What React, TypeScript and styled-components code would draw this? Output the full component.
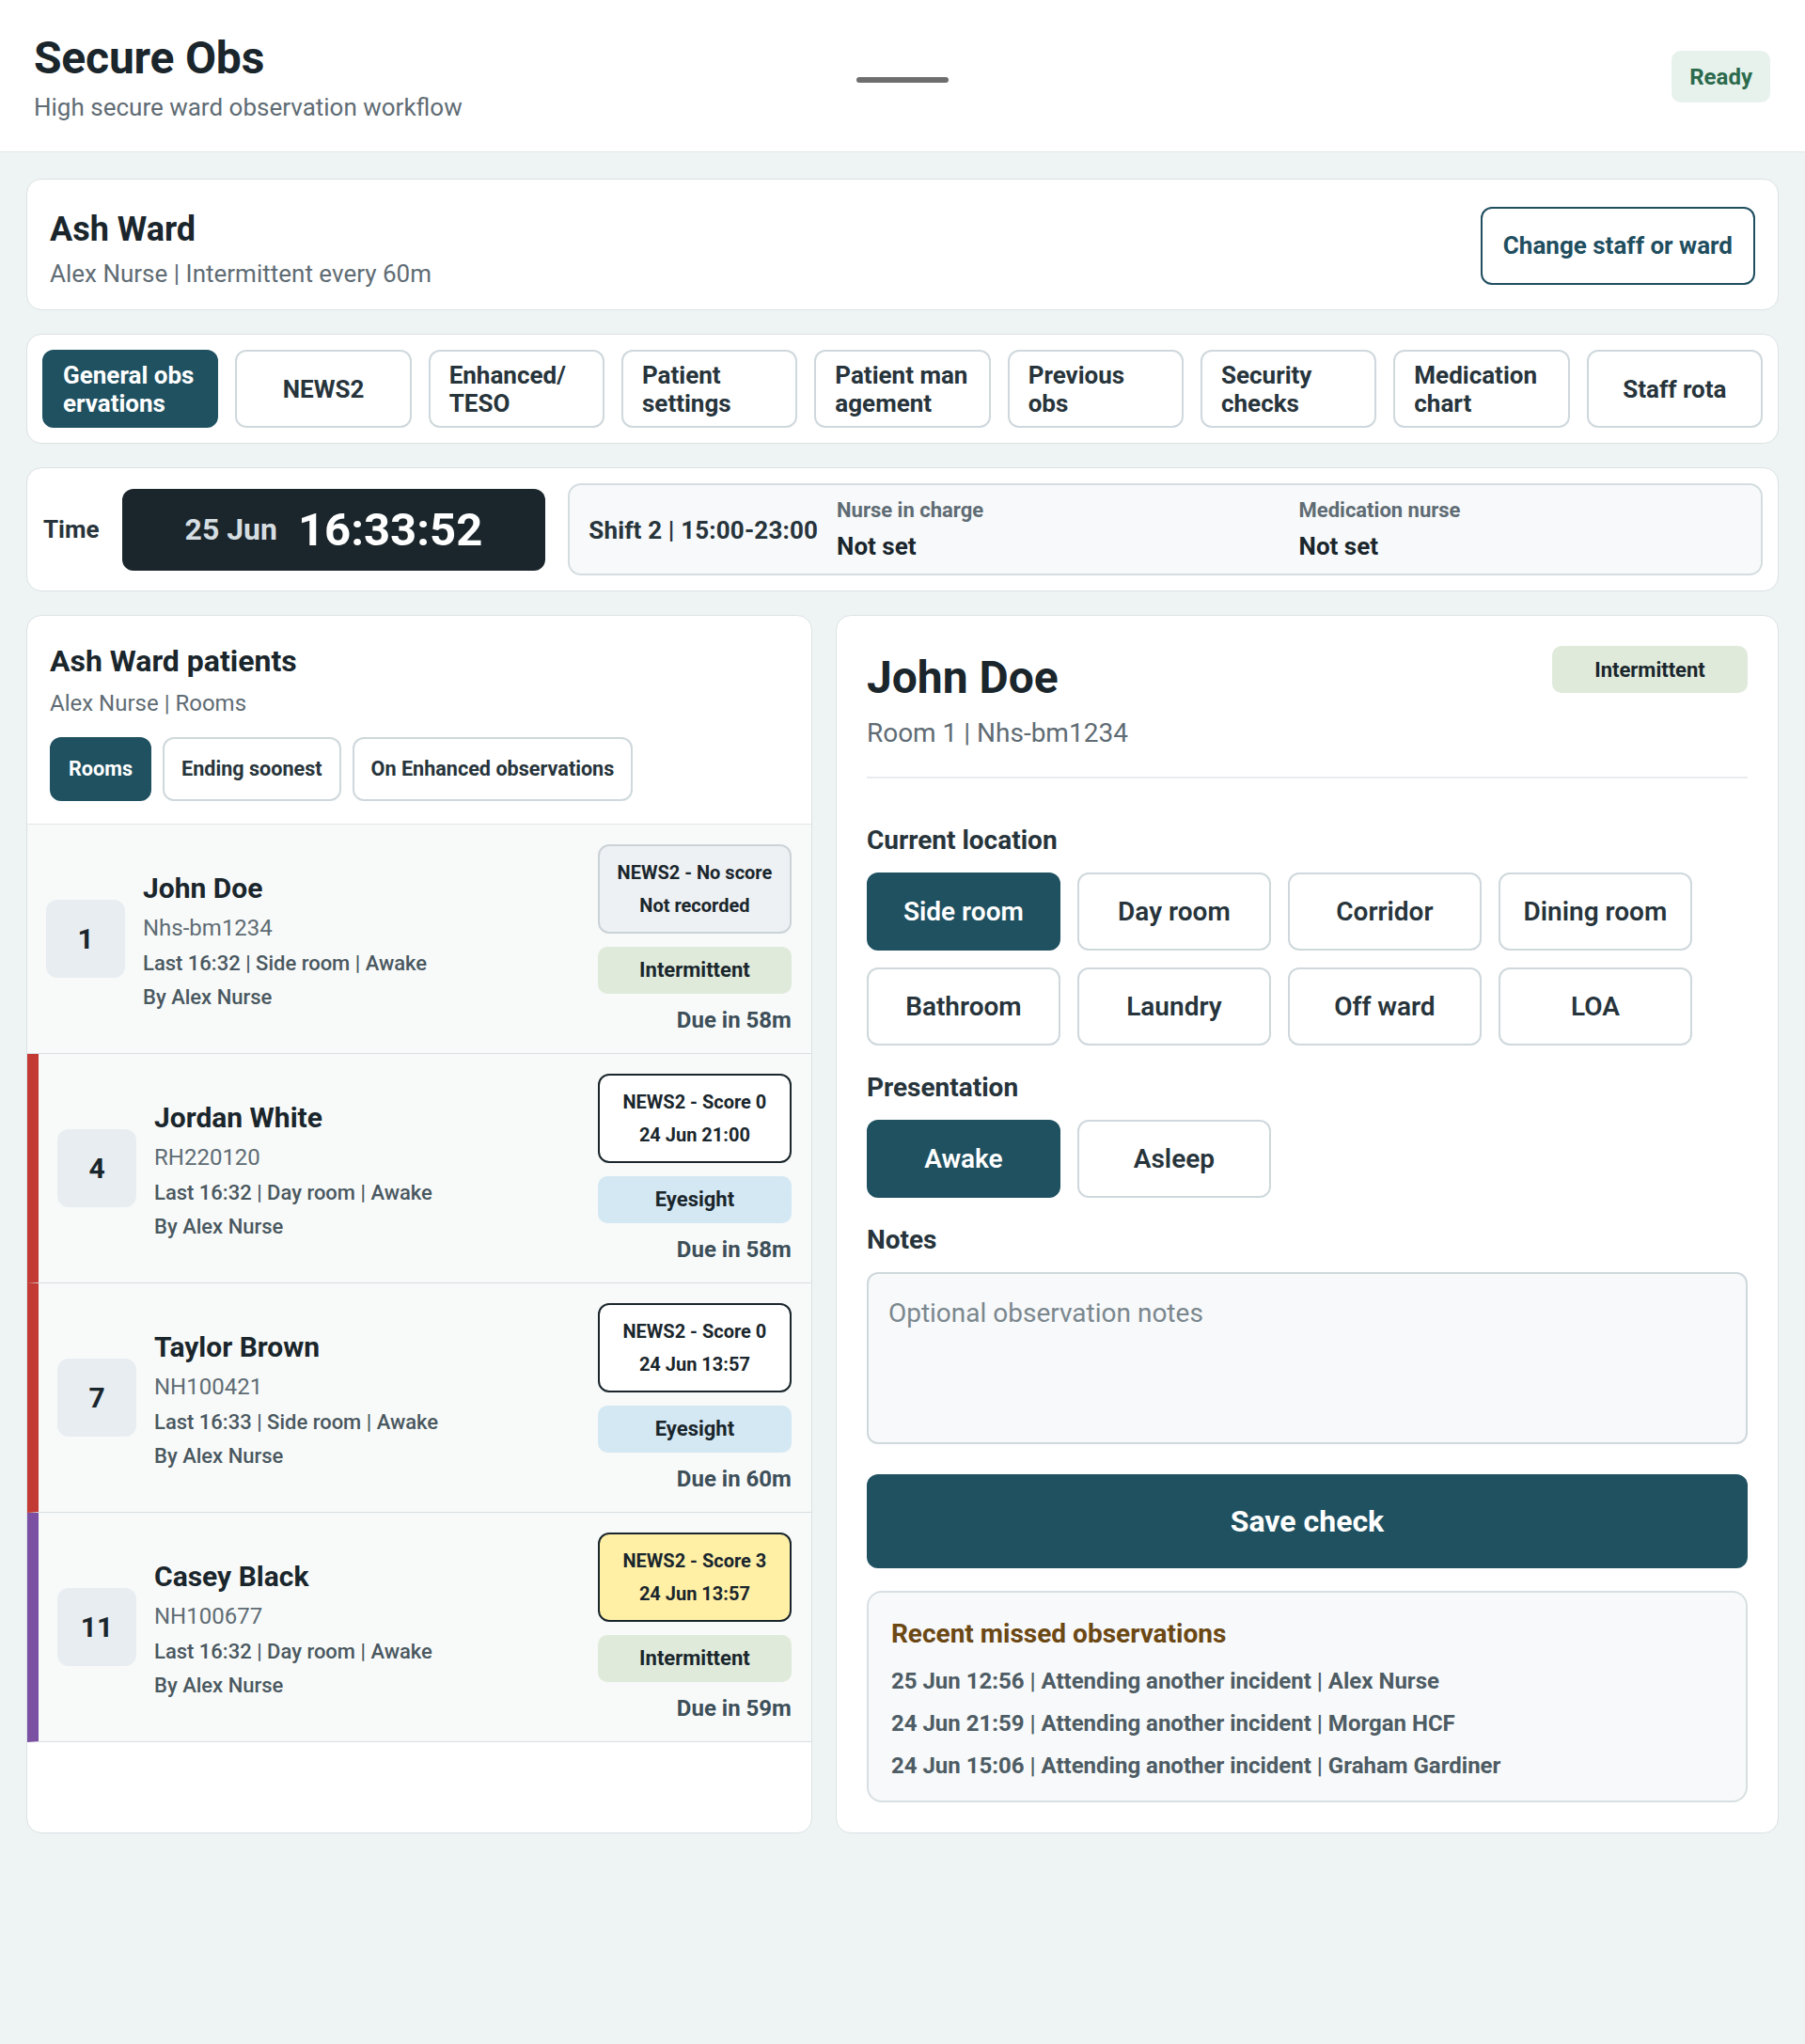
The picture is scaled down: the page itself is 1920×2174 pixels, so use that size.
import React from 'react';
import styled, { createGlobalStyle } from 'styled-components';

const GlobalStyle = createGlobalStyle`
  * {
    box-sizing: border-box;
  }
  body {
    margin: 0;
    background: #eef3f3;
    font-family: Roboto, 'Liberation Sans', Arial, sans-serif;
    color: #1a262c;
  }
  button,
  textarea {
    font-family: inherit;
  }
`;

const TopBar = styled.header`
  display: grid;
  grid-template-columns: 1fr auto 1fr;
  align-items: center;
  padding: 33px 37px 31px 36px;
  background: #fff;
  border-bottom: 1px solid #e1e7e8;
`;

const Brand = styled.div`
  display: flex;
  flex-direction: column;
  gap: 8px;
`;

const AppTitle = styled.h1`
  margin: 0;
  font-size: 48px;
  line-height: 58px;
  font-weight: 700;
  letter-spacing: -0.2px;
  color: #1a262c;
`;

const AppSubtitle = styled.p`
  margin: 0;
  font-size: 26px;
  line-height: 31px;
  color: #5f6c74;
`;

const Handle = styled.div`
  width: 98px;
  height: 6px;
  margin-top: 6px;
  border-radius: 3px;
  background: #6e6e6e;
`;

const ReadyPill = styled.span`
  justify-self: end;
  display: inline-flex;
  align-items: center;
  height: 55px;
  padding: 0 19px;
  border-radius: 10px;
  background: #e7f2ec;
  color: #2c6a4d;
  font-size: 24px;
  font-weight: 700;
`;

const Main = styled.main`
  display: flex;
  flex-direction: column;
  gap: 25px;
  padding: 28px 28px 60px;
`;

const Card = styled.section`
  background: #fff;
  border: 1px solid #dbe2e5;
  border-radius: 16px;
`;

const WardCard = styled(Card)`
  display: flex;
  justify-content: space-between;
  align-items: center;
  padding: 24px 24px 22px;
`;

const TitleBlock = styled.div`
  display: flex;
  flex-direction: column;
  gap: 10px;
  padding-top: 8px;
`;

const WardName = styled.h2`
  margin: 0;
  font-size: 36px;
  line-height: 43px;
  font-weight: 700;
  color: #1a262c;
`;

const Muted = styled.p<{ $size?: number }>`
  margin: 0;
  font-size: ${({ $size }) => $size ?? 26}px;
  line-height: 1.2;
  color: #5f6c74;
`;

const OutlineButton = styled.button`
  height: 83px;
  padding: 0 22px;
  border: 2px solid #1f4e5f;
  border-radius: 12px;
  background: #fff;
  color: #1f4e5f;
  font-size: 26px;
  font-weight: 700;
`;

const TabsCard = styled(Card)`
  display: grid;
  grid-template-columns: repeat(9, minmax(0, 1fr));
  gap: 18px;
  padding: 16px;
`;

const Tab = styled.button<{ $active?: boolean }>`
  min-width: 0;
  height: 83px;
  padding: 0 20px;
  display: flex;
  align-items: center;
  justify-content: center;
  text-align: left;
  border-radius: 12px;
  border: 2px solid ${({ $active }) => ($active ? '#1f5161' : '#cfd8dc')};
  background: ${({ $active }) => ($active ? '#1f5161' : '#fff')};
  color: ${({ $active }) => ($active ? '#fff' : '#27343b')};
  font-size: 26px;
  font-weight: 700;
  line-height: 30px;
  overflow-wrap: anywhere;
`;

const TimeCard = styled(Card)`
  display: grid;
  grid-template-columns: auto auto 1fr;
  align-items: center;
  gap: 24px;
  padding: 16px 16px 16px 17px;
`;

const FieldLabel = styled.span`
  font-size: 26px;
  font-weight: 700;
  color: #27343b;
`;

const ShiftLabel = styled(FieldLabel)`
  letter-spacing: 0.15px;
`;

const Clock = styled.div`
  display: flex;
  align-items: center;
  gap: 22px;
  height: 87px;
  padding: 0 67px;
  border-radius: 12px;
  background: #1a262c;
`;

const ClockDate = styled.span`
  font-size: 32px;
  font-weight: 700;
  color: #d5dde1;
`;

const ClockTime = styled.span`
  font-size: 49px;
  font-weight: 700;
  color: #fff;
`;

const ShiftBox = styled.div`
  display: grid;
  grid-template-columns: auto 1fr 1fr;
  align-items: center;
  gap: 20px;
  padding: 14px 20px 13px;
  border: 2px solid #d5dde0;
  border-radius: 14px;
  background: #f7f9fa;
`;

const StaffSlot = styled.div`
  display: flex;
  flex-direction: column;
  gap: 10px;
`;

const SlotLabel = styled.span`
  font-size: 22px;
  line-height: 26px;
  font-weight: 700;
  color: #5f6c74;
`;

const SlotValue = styled.span`
  font-size: 26px;
  line-height: 31px;
  font-weight: 700;
  color: #1a262c;
`;

const Columns = styled.div`
  display: grid;
  grid-template-columns: 5fr 6fr;
  gap: 25px;
  align-items: stretch;
`;

const PatientsCard = styled(Card)`
  display: flex;
  flex-direction: column;
  overflow: hidden;
`;

const PatientsHead = styled.div`
  padding: 29px 24px 24px;
  border-bottom: 1px solid #e1e6e8;
`;

const PanelTitle = styled.h2`
  margin: 0 0 12px;
  font-size: 32px;
  line-height: 38px;
  font-weight: 700;
  color: #1a262c;
`;

const FilterRow = styled.div`
  display: flex;
  gap: 12px;
  margin-top: 21px;
`;

const FilterButton = styled.button<{ $active?: boolean }>`
  height: 68px;
  padding: 0 18px;
  border-radius: 12px;
  border: 2px solid ${({ $active }) => ($active ? '#1f5161' : '#cfd8dc')};
  background: ${({ $active }) => ($active ? '#1f5161' : '#fff')};
  color: ${({ $active }) => ($active ? '#fff' : '#27343b')};
  font-size: 21.6px;
  font-weight: 700;
`;

const PatientRow = styled.div<{ $flag?: string }>`
  display: grid;
  grid-template-columns: 84px 1fr 206px;
  align-items: center;
  gap: 19px;
  padding: 21px 21px 20px 20px;
  background: #f8faf9;
  border-bottom: 1px solid #d8dee2;
  border-left: ${({ $flag }) => ($flag ? `12px solid ${$flag}` : 'none')};
`;

const RoomBox = styled.div`
  height: 83px;
  display: flex;
  align-items: center;
  justify-content: center;
  border-radius: 12px;
  background: #e8edf1;
  font-size: 30px;
  font-weight: 700;
  color: #1a262c;
`;

const PatientInfo = styled.div`
  display: flex;
  flex-direction: column;
  gap: 10px;
  min-width: 0;
  padding-top: 4px;
`;

const PatientName = styled.span`
  font-size: 30px;
  line-height: 36px;
  font-weight: 700;
  color: #1a262c;
`;

const PatientId = styled.span`
  font-size: 24px;
  line-height: 29px;
  color: #5f6c74;
`;

const PatientMeta = styled.span`
  font-size: 22px;
  line-height: 26px;
  font-weight: 500;
  color: #4a5860;
`;

const PatientSide = styled.div`
  display: flex;
  flex-direction: column;
`;

const newsTones = {
  none: { bg: '#eef1f3', border: '#cbd3d8' },
  clear: { bg: '#fff', border: '#1a262c' },
  warn: { bg: '#fff0a6', border: '#1a262c' },
};

type NewsTone = keyof typeof newsTones;

const NewsBox = styled.div<{ $tone: NewsTone }>`
  display: flex;
  flex-direction: column;
  align-items: center;
  gap: 11px;
  padding: 16px 10px;
  border-radius: 12px;
  border: 2px solid ${({ $tone }) => newsTones[$tone].border};
  background: ${({ $tone }) => newsTones[$tone].bg};
  font-size: 20px;
  line-height: 24px;
  font-weight: 700;
  color: #1a262c;
`;

const levelColors: Record<string, string> = {
  Intermittent: '#dfeadb',
  Eyesight: '#d4e8f3',
};

const LevelBadge = styled.div<{ $level: string }>`
  height: 50px;
  display: flex;
  align-items: center;
  justify-content: center;
  border-radius: 10px;
  background: ${({ $level }) => levelColors[$level] ?? '#e8edf1'};
  font-size: 22px;
  font-weight: 700;
  color: #1a262c;
`;

const RowBadge = styled(LevelBadge)`
  margin: 14px 0 13px;
`;

const DueText = styled.span`
  font-size: 24px;
  line-height: 30px;
  font-weight: 700;
  color: #3d4f59;
  text-align: right;
`;

const DetailCard = styled(Card)`
  display: flex;
  flex-direction: column;
  padding: 32px;
`;

const DetailHead = styled.div`
  display: flex;
  justify-content: space-between;
  align-items: flex-start;
  padding-bottom: 29px;
  border-bottom: 2px solid #e8ecee;
`;

const PatientHeading = styled.h2`
  margin: 5px 0 13px;
  font-size: 48px;
  line-height: 58px;
  font-weight: 700;
  color: #1a262c;
`;

const HeadBadge = styled(LevelBadge)`
  width: 208px;
`;

const Form = styled.div`
  display: flex;
  flex-direction: column;
  gap: 28px;
  margin-top: 49px;
`;

const Field = styled.div`
  display: flex;
  flex-direction: column;
  gap: 17px;
`;

const SectionLabel = styled.span`
  font-size: 28px;
  line-height: 34px;
  font-weight: 700;
  color: #27343b;
`;

const ChoiceGrid = styled.div`
  display: grid;
  grid-template-columns: repeat(4, 206px);
  gap: 18px;
`;

const Choice = styled.button<{ $active?: boolean }>`
  height: 83px;
  border-radius: 12px;
  border: 2px solid ${({ $active }) => ($active ? '#1f5161' : '#cfd8dc')};
  background: ${({ $active }) => ($active ? '#1f5161' : '#fff')};
  color: ${({ $active }) => ($active ? '#fff' : '#27343b')};
  font-size: 28px;
  font-weight: 600;
`;

const NotesInput = styled.textarea`
  height: 183px;
  padding: 24px 21px;
  border: 2px solid #cfd8dc;
  border-radius: 12px;
  background: #f7f9fa;
  font-size: 28px;
  line-height: 36px;
  color: #1a262c;
  resize: none;
  outline: none;

  &::placeholder {
    color: #7b878e;
  }
`;

const SaveButton = styled.button`
  height: 100px;
  margin-top: 4px;
  border: none;
  border-radius: 12px;
  background: #1f5161;
  color: #fff;
  font-size: 32px;
  font-weight: 700;
`;

const MissedBox = styled.div`
  display: flex;
  flex-direction: column;
  gap: 15px;
  margin-top: 24px;
  padding: 27px 24px 22px;
  border: 2px solid #d8dfe2;
  border-radius: 16px;
  background: #f7f9fa;
`;

const MissedTitle = styled.span`
  margin-bottom: 3px;
  font-size: 28px;
  line-height: 34px;
  font-weight: 700;
  color: #6b4814;
`;

const MissedLine = styled.span`
  font-size: 24px;
  line-height: 30px;
  font-weight: 700;
  color: #4e5c64;
`;

// <wbr> marks where the long words split, as the reference layout does
const tabs: React.ReactNode[] = [
  <>General obs<wbr />ervations</>,
  'NEWS2',
  'Enhanced/ TESO',
  'Patient settings',
  <>Patient man<wbr />agement</>,
  'Previous obs',
  'Security checks',
  'Medication chart',
  'Staff rota',
];

const filters = ['Rooms', 'Ending soonest', 'On Enhanced observations'];

const patients: {
  room: string;
  name: string;
  id: string;
  last: string;
  news: [string, string];
  tone: NewsTone;
  level: string;
  due: string;
  flag?: string;
}[] = [
  {
    room: '1',
    name: 'John Doe',
    id: 'Nhs-bm1234',
    last: 'Last 16:32 | Side room | Awake',
    news: ['NEWS2 - No score', 'Not recorded'],
    tone: 'none',
    level: 'Intermittent',
    due: 'Due in 58m',
  },
  {
    room: '4',
    name: 'Jordan White',
    id: 'RH220120',
    last: 'Last 16:32 | Day room | Awake',
    news: ['NEWS2 - Score 0', '24 Jun 21:00'],
    tone: 'clear',
    level: 'Eyesight',
    due: 'Due in 58m',
    flag: '#c23a33',
  },
  {
    room: '7',
    name: 'Taylor Brown',
    id: 'NH100421',
    last: 'Last 16:33 | Side room | Awake',
    news: ['NEWS2 - Score 0', '24 Jun 13:57'],
    tone: 'clear',
    level: 'Eyesight',
    due: 'Due in 60m',
    flag: '#c23a33',
  },
  {
    room: '11',
    name: 'Casey Black',
    id: 'NH100677',
    last: 'Last 16:32 | Day room | Awake',
    news: ['NEWS2 - Score 3', '24 Jun 13:57'],
    tone: 'warn',
    level: 'Intermittent',
    due: 'Due in 59m',
    flag: '#7b4fa2',
  },
];

const locations = ['Side room', 'Day room', 'Corridor', 'Dining room', 'Bathroom', 'Laundry', 'Off ward', 'LOA'];

const missed = [
  '25 Jun 12:56 | Attending another incident | Alex Nurse',
  '24 Jun 21:59 | Attending another incident | Morgan HCF',
  '24 Jun 15:06 | Attending another incident | Graham Gardiner',
];

export default function App() {
  return (
    <>
      <GlobalStyle />
      <TopBar>
        <Brand>
          <AppTitle>Secure Obs</AppTitle>
          <AppSubtitle>High secure ward observation workflow</AppSubtitle>
        </Brand>
        <Handle />
        <ReadyPill>Ready</ReadyPill>
      </TopBar>

      <Main>
        <WardCard>
          <TitleBlock>
            <WardName>Ash Ward</WardName>
            <Muted>Alex Nurse | Intermittent every 60m</Muted>
          </TitleBlock>
          <OutlineButton>Change staff or ward</OutlineButton>
        </WardCard>

        <TabsCard>
          {tabs.map((t, i) => (
            <Tab key={i} $active={i === 0}>
              {t}
            </Tab>
          ))}
        </TabsCard>

        <TimeCard>
          <FieldLabel>Time</FieldLabel>
          <Clock>
            <ClockDate>25 Jun</ClockDate>
            <ClockTime>16:33:52</ClockTime>
          </Clock>
          <ShiftBox>
            <ShiftLabel>Shift 2 | 15:00-23:00</ShiftLabel>
            <StaffSlot>
              <SlotLabel>Nurse in charge</SlotLabel>
              <SlotValue>Not set</SlotValue>
            </StaffSlot>
            <StaffSlot>
              <SlotLabel>Medication nurse</SlotLabel>
              <SlotValue>Not set</SlotValue>
            </StaffSlot>
          </ShiftBox>
        </TimeCard>

        <Columns>
          <PatientsCard>
            <PatientsHead>
              <PanelTitle>Ash Ward patients</PanelTitle>
              <Muted $size={24}>Alex Nurse | Rooms</Muted>
              <FilterRow>
                {filters.map((f, i) => (
                  <FilterButton key={f} $active={i === 0}>
                    {f}
                  </FilterButton>
                ))}
              </FilterRow>
            </PatientsHead>
            {patients.map((p) => (
              <PatientRow key={p.room} $flag={p.flag}>
                <RoomBox>{p.room}</RoomBox>
                <PatientInfo>
                  <PatientName>{p.name}</PatientName>
                  <PatientId>{p.id}</PatientId>
                  <PatientMeta>{p.last}</PatientMeta>
                  <PatientMeta>By Alex Nurse</PatientMeta>
                </PatientInfo>
                <PatientSide>
                  <NewsBox $tone={p.tone}>
                    <span>{p.news[0]}</span>
                    <span>{p.news[1]}</span>
                  </NewsBox>
                  <RowBadge $level={p.level}>{p.level}</RowBadge>
                  <DueText>{p.due}</DueText>
                </PatientSide>
              </PatientRow>
            ))}
          </PatientsCard>

          <DetailCard>
            <DetailHead>
              <div>
                <PatientHeading>John Doe</PatientHeading>
                <Muted $size={28}>Room 1 | Nhs-bm1234</Muted>
              </div>
              <HeadBadge $level="Intermittent">Intermittent</HeadBadge>
            </DetailHead>

            <Form>
              <Field>
                <SectionLabel>Current location</SectionLabel>
                <ChoiceGrid>
                  {locations.map((l, i) => (
                    <Choice key={l} $active={i === 0}>
                      {l}
                    </Choice>
                  ))}
                </ChoiceGrid>
              </Field>
              <Field>
                <SectionLabel>Presentation</SectionLabel>
                <ChoiceGrid>
                  <Choice $active>Awake</Choice>
                  <Choice>Asleep</Choice>
                </ChoiceGrid>
              </Field>
              <Field>
                <SectionLabel>Notes</SectionLabel>
                <NotesInput placeholder="Optional observation notes" />
              </Field>
              <SaveButton>Save check</SaveButton>
            </Form>

            <MissedBox>
              <MissedTitle>Recent missed observations</MissedTitle>
              {missed.map((m) => (
                <MissedLine key={m}>{m}</MissedLine>
              ))}
            </MissedBox>
          </DetailCard>
        </Columns>
      </Main>
    </>
  );
}
